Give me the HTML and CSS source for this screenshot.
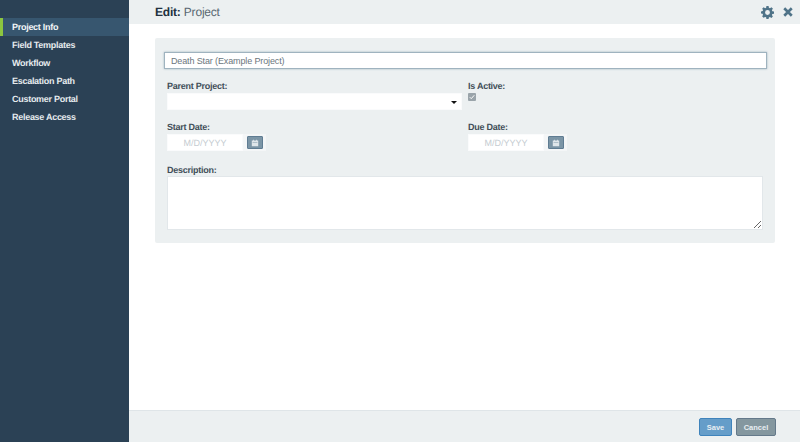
FILE: index.html
```html
<!DOCTYPE html>
<html lang="en">
<head>
<meta charset="utf-8">
<title>Edit: Project</title>
<link rel="stylesheet" href="styles.css">
</head>
<body>
<div class="app">
  <nav class="sidebar">
    <a class="nav-item active">Project Info</a>
    <a class="nav-item">Field Templates</a>
    <a class="nav-item">Workflow</a>
    <a class="nav-item">Escalation Path</a>
    <a class="nav-item">Customer Portal</a>
    <a class="nav-item">Release Access</a>
  </nav>
  <main class="main">
    <header class="topbar">
      <h1 class="title"><b>Edit:</b> Project</h1>
      <div class="top-icons">
        <svg class="gear" viewBox="0 0 24 24" width="13" height="13"><path fill="#4f7388" fill-rule="evenodd" d="M10 0h4l.6 3.200 2 .8L19.300 2.200l2.800 2.800L20.100 7.600l.8 2L24 10.200v3.900l-3.100.6-.8 2 1.800 2.600-2.800 2.800-2.600-1.800-2 .8L14 24h-4l-.6-3.100-2-.8-2.600 1.800-2.800-2.800 1.800-2.600-.8-2L0 14v-4l3.100-.6.800-2L2.100 4.900 4.900 2.100l2.600 1.900 2-.8zM12 7.500a4.500 4.500 0 1 0 0 9 4.500 4.500 0 0 0 0-9z"/></svg>
        <svg class="close" viewBox="0 0 12 12" width="10" height="10"><path stroke="#4f7388" stroke-width="3.200" d="M1.500 1.500l9 9M10.500 1.500l-9 9"/></svg>
      </div>
    </header>
    <div class="content">
      <form class="panel">
        <input class="name-input" type="text" value="Death Star (Example Project)">
        <div class="grid">
          <div class="field">
            <label class="label">Parent Project:</label>
            <div class="select"><span class="caret"></span></div>
          </div>
          <div class="field">
            <label class="label">Is Active:</label>
            <span class="check"><svg viewBox="0 0 8 8" width="6" height="6"><path fill="none" stroke="#fff" stroke-width="1.300" d="M1 4.200l2 2 4-4.500"/></svg></span>
          </div>
          <div class="field">
            <label class="label">Start Date:</label>
            <div class="date">
              <div class="date-input">M/D/YYYY</div>
              <div class="date-addon"><span class="cal-btn"><svg viewBox="0 0 10 10" width="8" height="8"><path fill="#dfe6ea" d="M1 2h8v7H1zM2.500 .8h1V3h-1zM6.500 .8h1V3h-1z"/><path fill="#7b95a6" d="M2 4h6v.6H2z"/></svg></span></div>
            </div>
          </div>
          <div class="field">
            <label class="label">Due Date:</label>
            <div class="date">
              <div class="date-input">M/D/YYYY</div>
              <div class="date-addon"><span class="cal-btn"><svg viewBox="0 0 10 10" width="8" height="8"><path fill="#dfe6ea" d="M1 2h8v7H1zM2.500 .8h1V3h-1zM6.500 .8h1V3h-1z"/><path fill="#7b95a6" d="M2 4h6v.6H2z"/></svg></span></div>
            </div>
          </div>
        </div>
        <div class="field desc">
          <label class="label">Description:</label>
          <textarea class="textarea"></textarea>
        </div>
      </form>
    </div>
    <footer class="footer">
      <button class="btn save" type="button">Save</button>
      <button class="btn cancel" type="button">Cancel</button>
    </footer>
  </main>
</div>
</body>
</html>
```

FILE: styles.css
```css
* { box-sizing: border-box; }
html, body { margin: 0; height: 100%; }
body { font-family: "Liberation Sans", Arial, sans-serif; color: #2f3f4c; background: #fff; text-rendering: geometricPrecision; }
.app { display: flex; width: 800px; height: 442px; overflow: hidden; }

.sidebar { width: 129px; flex: none; background: #2b4155; padding-top: 18px; }
.nav-item { display: block; height: 18px; line-height: 18px; padding-left: 12px; font-size: 9px; letter-spacing: -0.28px; font-weight: 700; color: #e6ebee; }
.nav-item.active { background: #37566f; border-left: 3px solid #8cc63f; padding-left: 9px; color: #f4f6f8; }

.main { flex: 1; display: flex; flex-direction: column; min-width: 0; }
.topbar { height: 24px; flex: none; background: #ecf0f1; display: flex; align-items: center; justify-content: space-between; padding: 0 7px 0 26px; }
.title { margin: 0; font-size: 12px; letter-spacing: -0.2px; font-weight: 400; color: #5a6872; }
.title b { font-weight: 700; color: #22313f; }
.top-icons { display: flex; align-items: center; gap: 9px; }
.gear, .close { display: block; }

.content { flex: 1; padding: 14px 25px 0 26px; }
.panel { background: #ecf0f1; height: 205px; padding: 14px 8px 0 9px; border-radius: 2px; }
.name-input { display: block; width: 603px; height: 17px; padding: 0 6px; border: 1px solid #9fb3bf; box-shadow: 0 0 2px #9fb3bf; background: #fff; font: 9px "Liberation Sans", Arial, sans-serif; letter-spacing: -0.13px; color: #6b767d; outline: none; }

.grid { display: grid; grid-template-columns: 301px 1fr; margin: 11px 0 0 3px; row-gap: 11px; }
.label { display: block; font-size: 9px; letter-spacing: -0.26px; font-weight: 700; line-height: 12px; color: #414e58; margin-bottom: 1px; }
.select { position: relative; width: 295px; height: 17px; background: #fff; border: 1px solid #fafbfc; }
.caret { position: absolute; right: 4px; top: 7px; border: 3px solid transparent; border-top-color: #111; border-bottom: 0; }
.check { display: flex; align-items: center; justify-content: center; width: 8px; height: 8px; margin-top: 1px; border-radius: 1px; background: #9aa4aa; }

.date { display: flex; width: 99px; height: 17px; margin-top: 1px; }
.date-input { width: 76px; background: #fff; border: 1px solid #fafbfc; text-align: center; font-size: 9px; line-height: 16px; color: #c5ccd1; }
.date-addon { flex: 1; background: #f4f6f7; display: flex; align-items: center; justify-content: center; }
.cal-btn { width: 16px; height: 13px; background: #7b95a6; border: 1px solid #5f7c92; border-radius: 1px; display: flex; align-items: center; justify-content: center; }
.cal-btn svg { display: block; }

.desc { margin: 13px 0 0 3px; }
.desc .label { margin-bottom: 0; }
.textarea { display: block; width: 596px; height: 54px; background: #fff; border: 1px solid #e2e7ea; outline: none; resize: both; margin: 0; padding: 0; }

.footer { height: 32px; flex: none; background: #ecf0f1; border-top: 1px solid #dfe5e8; display: flex; align-items: center; justify-content: flex-end; gap: 4px; padding: 1px 24px 0 0; }
.btn { height: 18px; padding: 0; border-radius: 2px; font: 700 7.500px "Liberation Sans", Arial, sans-serif; color: #e8eef2; }
.save { width: 33px; background: #659dc9; border: 1px solid #3f83bb; }
.cancel { width: 40px; background: #84979f; border: 1px solid #64798a; }
```
